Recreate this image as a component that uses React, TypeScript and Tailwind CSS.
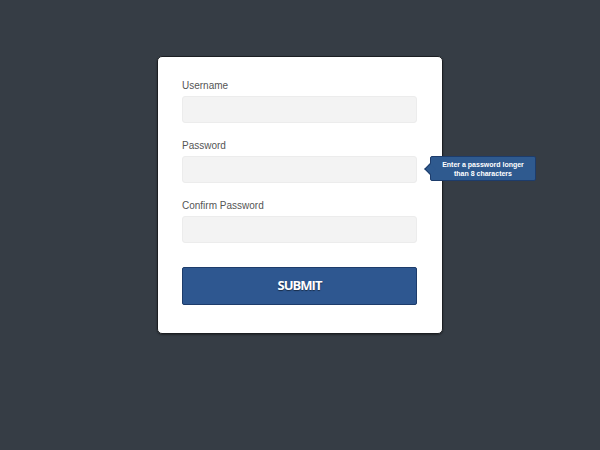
import React from 'react';

const Field: React.FC<{ label: string; type?: string; className?: string; children?: React.ReactNode }> = ({
  label,
  type = 'text',
  className = '',
  children,
}) => (
  <div className={className}>
    <label className="block h-[12px] text-[10px] leading-[12px] text-[#555]">{label}</label>
    <div className="relative mt-[4px]">
      <input
        type={type}
        className="block h-[27px] w-full rounded-[3px] border border-[#ececec] bg-[#f3f3f3] outline-none"
      />
      {children}
    </div>
  </div>
);

export default function App() {
  return (
    <div
      className="flex min-h-[450px] w-full justify-center bg-[#363d45] pt-[56px]"
      style={{ fontFamily: '"Liberation Sans", Arial, sans-serif' }}
    >
      <div className="h-[278px] w-[286px] rounded-[5px] border border-[#1c1f23] bg-white pl-[24px] pr-[25px] pt-[23px] shadow-[0_1px_2px_rgba(0,0,0,0.4)]">
        <Field label="Username" />
        <Field label="Password" type="password" className="mt-[17px]">
          {/* tooltip */}
          <div className="absolute left-[calc(100%+13px)] top-0 flex h-[25px] w-[106px] items-center justify-center rounded-[2px] border border-[#1d3c6b] bg-[#2f5a8f] text-center text-[7px] font-bold leading-[9px] text-white">
            <span className="absolute left-[-5px] top-1/2 h-[8px] w-[8px] -translate-y-1/2 rotate-45 border-b border-l border-[#1d3c6b] bg-[#2f5a8f]" />
            <span className="relative">
              Enter a password longer
              <br />
              than 8 characters
            </span>
          </div>
        </Field>
        <Field label="Confirm Password" type="password" className="mt-[17px]" />
        <button
          className="mt-[24px] block h-[38px] w-full rounded-[2px] border border-[#1d3c6b] bg-[#2e5790] text-[13px] font-bold tracking-[-1px] text-white [text-shadow:0_1px_1px_rgba(0,0,0,0.5)]"
          style={{ fontFamily: '"Open Sans", "Liberation Sans", sans-serif' }}
        >
          SUBMIT
        </button>
      </div>
    </div>
  );
}
